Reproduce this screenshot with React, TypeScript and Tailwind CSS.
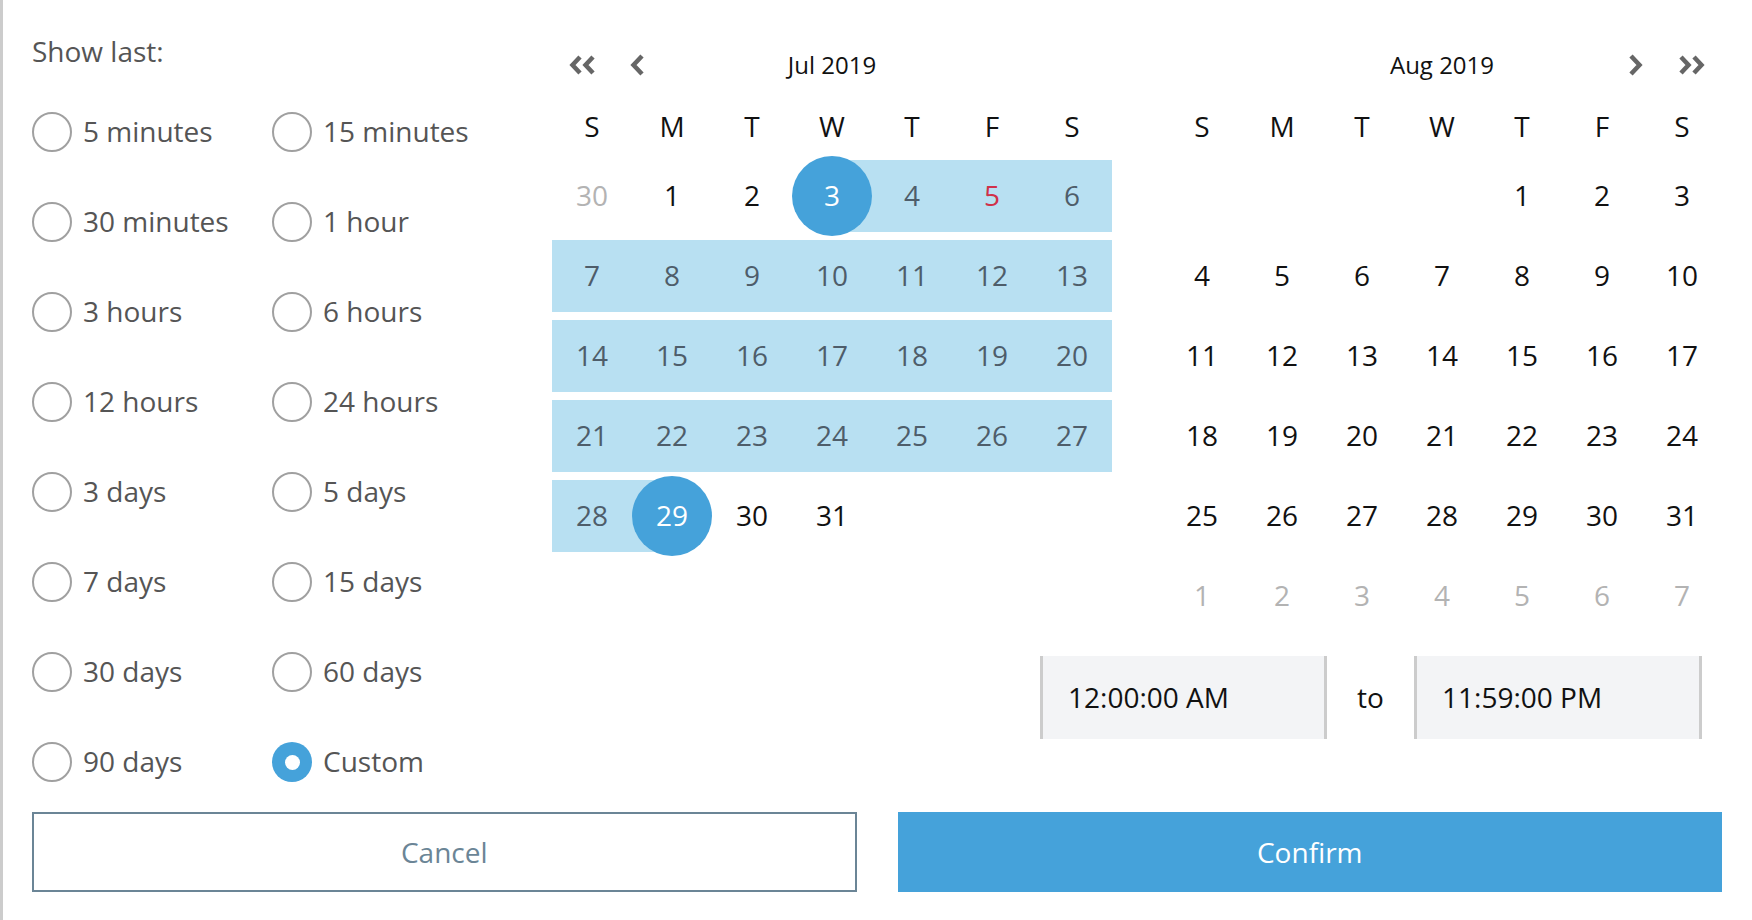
import React from 'react'

const presets = [
  '5 minutes', '15 minutes',
  '30 minutes', '1 hour',
  '3 hours', '6 hours',
  '12 hours', '24 hours',
  '3 days', '5 days',
  '7 days', '15 days',
  '30 days', '60 days',
  '90 days', 'Custom',
]

const weekdays = ['S', 'M', 'T', 'W', 'T', 'F', 'S']

type Day = { label: string; kind: 'blank' | 'out' | 'norm' | 'range' | 'red' | 'start' | 'end' }

const julDays: Day[] = [
  { label: '30', kind: 'out' },
  ...Array.from({ length: 31 }, (_, i): Day => {
    const d = i + 1
    let kind: Day['kind'] = 'norm'
    if (d === 3) kind = 'start'
    else if (d === 29) kind = 'end'
    else if (d === 5) kind = 'red'
    else if (d > 3 && d < 29) kind = 'range'
    return { label: String(d), kind }
  }),
]

const augDays: Day[] = [
  ...Array.from({ length: 4 }, (): Day => ({ label: '', kind: 'blank' })),
  ...Array.from({ length: 31 }, (_, i): Day => ({ label: String(i + 1), kind: 'norm' })),
  ...Array.from({ length: 7 }, (_, i): Day => ({ label: String(i + 1), kind: 'out' })),
]

const Chevron = ({ dir, double }: { dir: 'left' | 'right'; double?: boolean }) => {
  const flip = dir === 'right' ? 'scale(-1,1)' : undefined
  if (double) {
    return (
      <svg width="28" height="20" viewBox="0 0 28 20" className="text-[#666]">
        <g transform={flip} style={{ transformOrigin: 'center' }}>
          <polyline points="12,2 4.5,10 12,18" fill="none" stroke="currentColor" strokeWidth="4.5" />
          <polyline points="25,2 17.5,10 25,18" fill="none" stroke="currentColor" strokeWidth="4.5" />
        </g>
      </svg>
    )
  }
  return (
    <svg width="14" height="22" viewBox="0 0 14 22" className="text-[#666]">
      <g transform={flip} style={{ transformOrigin: 'center' }}>
        <polyline points="12,2 3.5,11 12,20" fill="none" stroke="currentColor" strokeWidth="4.5" />
      </g>
    </svg>
  )
}

const DayCell = ({ day }: { day: Day }) => {
  const { kind, label } = day
  const textColor =
    kind === 'out' ? 'text-[#b3b3b3]'
    : kind === 'range' ? 'text-[#4e5d6a]'
    : kind === 'red' ? 'text-[#d0314a]'
    : kind === 'start' || kind === 'end' ? 'text-white'
    : 'text-[#111]'
  return (
    <div className="relative h-[80px] flex items-center justify-center">
      {(kind === 'range' || kind === 'red') && <div className="absolute inset-x-0 top-[4px] bottom-[4px] bg-[#b8e0f2]" />}
      {kind === 'start' && <div className="absolute left-1/2 right-0 top-[4px] bottom-[4px] bg-[#b8e0f2]" />}
      {kind === 'end' && <div className="absolute left-0 right-1/2 top-[4px] bottom-[4px] bg-[#b8e0f2]" />}
      {(kind === 'start' || kind === 'end') && <div className="absolute inset-0 rounded-full bg-[#45a2da]" />}
      <span className={`relative -top-[1px] text-[28px] ${textColor}`}>{label}</span>
    </div>
  )
}

const Month = ({ title, days, side }: { title: string; days: Day[]; side: 'left' | 'right' }) => (
  <div className="w-[560px]">
    <div className="h-[66px] grid grid-cols-[1fr_auto_1fr] items-center">
      <div className="flex items-center gap-[34px] pl-[16px]">
        {side === 'left' && (
          <>
            <Chevron dir="left" double />
            <Chevron dir="left" />
          </>
        )}
      </div>
      <div className="text-[24px] text-[#111]">{title}</div>
      <div className="flex items-center justify-end gap-[35px] pr-[16px]">
        {side === 'right' && (
          <>
            <Chevron dir="right" />
            <Chevron dir="right" double />
          </>
        )}
      </div>
    </div>
    <div className="h-[58px] grid grid-cols-7 items-center">
      {weekdays.map((w, i) => (
        <div key={i} className="relative -top-[1px] text-center text-[28px] text-[#111]">{w}</div>
      ))}
    </div>
    <div className="grid grid-cols-7">
      {days.map((d, i) => (
        <DayCell key={i} day={d} />
      ))}
    </div>
  </div>
)

const Radio = ({ label, checked }: { label: string; checked?: boolean }) => (
  <div className="h-[90px] flex items-center">
    {checked ? (
      <span className="w-[40px] h-[40px] rounded-full bg-[#45a2da] flex items-center justify-center">
        <span className="w-[15px] h-[15px] rounded-full bg-white" />
      </span>
    ) : (
      <span className="w-[40px] h-[40px] rounded-full border-2 border-[#a0a0a0]" />
    )}
    <span className="relative -top-[1px] ml-[11px] text-[28px] text-[#555]">{label}</span>
  </div>
)

export default function App() {
  return (
    <div className="w-[1752px] h-[920px] bg-white border-l-[3px] border-[#cccccc] pl-[29px] pr-[30px] pt-[32px] font-['Open_Sans',sans-serif] overflow-hidden">
      <div className="flex">
        {/* Presets */}
        <div className="w-[520px]">
          <div className="h-[40px] flex items-center text-[28px] text-[#555]">
            <span className="relative -top-[1px]">Show last:</span>
          </div>
          <div className="mt-[15px] grid grid-cols-[240px_280px]">
            {presets.map((p) => (
              <Radio key={p} label={p} checked={p === 'Custom'} />
            ))}
          </div>
        </div>

        {/* Calendars */}
        <div className="flex flex-col">
          <div className="flex gap-[50px]">
            <Month title="Jul 2019" days={julDays} side="left" />
            <Month title="Aug 2019" days={augDays} side="right" />
          </div>
          <div className="mt-[20px] flex justify-end pr-[20px]">
            <div className="w-[287px] h-[83px] bg-[#f3f4f6] border-x-[3px] border-[#cccccc] flex items-center pl-[25px] text-[28px] text-[#111]">
              <span className="relative -top-[1px]">12:00:00 AM</span>
            </div>
            <div className="w-[87px] h-[83px] flex items-center justify-center text-[28px] text-[#111]">
              <span className="relative -top-[1px]">to</span>
            </div>
            <div className="w-[288px] h-[83px] bg-[#f3f4f6] border-x-[3px] border-[#cccccc] flex items-center pl-[25px] text-[28px] text-[#111]">
              <span className="relative -top-[1px]">11:59:00 PM</span>
            </div>
          </div>
        </div>
      </div>

      {/* Actions */}
      <div className="mt-[5px] grid grid-cols-2 gap-[41px]">
        <button className="h-[80px] border-2 border-[#6b8596] text-[28px] text-[#6b8596]">Cancel</button>
        <button className="h-[80px] bg-[#45a2da] text-[28px] text-white">Confirm</button>
      </div>
    </div>
  )
}
